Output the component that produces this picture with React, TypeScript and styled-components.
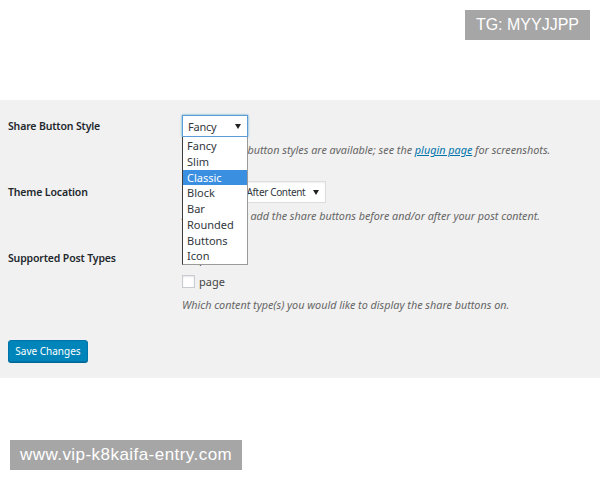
import React from "react";
import styled, { createGlobalStyle } from "styled-components";

const GlobalStyle = createGlobalStyle`
  html, body {
    margin: 0;
    padding: 0;
    background: #fff;
  }
  body {
    font-family: "Noto Sans", "Open Sans", sans-serif;
    color: #23282d;
  }
`;

const Page = styled.div`
  position: relative;
  width: 600px;
  height: 480px;
  display: flex;
  flex-direction: column;
  background: #fff;
  overflow: hidden;
`;

const TopGap = styled.div`
  height: 100px;
  flex: none;
`;

// grey overlay labels stamped on the screenshot
const Watermark = styled.div<{ $corner: "top-right" | "bottom-left" }>`
  position: absolute;
  ${(p) =>
    p.$corner === "top-right"
      ? "top: 10px; right: 10px; font-size: 16px; padding: 0 11px;"
      : "bottom: 10px; left: 10px; font-size: 17px; letter-spacing: 0.45px; padding: 0 10px;"}
  height: 30px;
  line-height: 30px;
  background: #a6a6a6;
  color: #fff;
  font-family: "Liberation Sans", Arial, sans-serif;
  z-index: 5;
`;

const Panel = styled.div`
  height: 278px;
  flex: none;
  box-sizing: border-box;
  background: #f1f1f1;
  padding: 15px 0 0 8px;
  display: flex;
  flex-direction: column;
`;

const Row = styled.div<{ $gap?: number }>`
  display: flex;
  margin-top: ${(p) => p.$gap ?? 0}px;
`;

const Label = styled.div<{ $lh: number }>`
  width: 174px;
  flex: none;
  font-size: 10.5px;
  letter-spacing: -0.15px;
  font-weight: 600;
  color: #23282d;
  line-height: ${(p) => p.$lh}px;
`;

const Field = styled.div`
  display: flex;
  flex-direction: column;
  align-items: flex-start;
`;

const SelectWrap = styled.div`
  position: relative;
`;

const Select = styled.div<{ $width: number; $focused?: boolean; $compact?: boolean }>`
  box-sizing: border-box;
  width: ${(p) => p.$width}px;
  height: 22px;
  display: flex;
  align-items: center;
  gap: 4px;
  padding: 0 6px 0 ${(p) => (p.$compact ? 13 : 5)}px;
  background: #fff;
  border: 1px solid ${(p) => (p.$focused ? "#5b9dd9" : "#ddd")};
  box-shadow: ${(p) =>
    p.$focused
      ? "0 0 2px rgba(30, 140, 190, 0.8)"
      : "inset 0 1px 2px rgba(0, 0, 0, 0.07)"};
  font-size: ${(p) => (p.$compact ? 10 : 11)}px;
  letter-spacing: ${(p) => (p.$compact ? -0.35 : -0.25)}px;
  color: #32373c;
  white-space: nowrap;
`;

const SelectText = styled.span`
  flex: 1;
  overflow: hidden;
`;

const Dropdown = styled.ul`
  position: absolute;
  top: 100%;
  left: 0;
  width: 66px;
  box-sizing: border-box;
  margin: 0;
  padding: 1px 0 0;
  list-style: none;
  background: #fff;
  border: 1px solid #9a9a9a;
  border-left-color: #3c3c3c;
  border-top: none;
  z-index: 3;
`;

const Option = styled.li<{ $active?: boolean }>`
  height: 15.75px;
  line-height: 15.75px;
  padding-left: 4px;
  font-size: 11px;
  color: ${(p) => (p.$active ? "#fff" : "#32373c")};
  background: ${(p) => (p.$active ? "#3b8fe0" : "transparent")};
`;

const Description = styled.p<{ $gap: number }>`
  margin: ${(p) => p.$gap}px 0 0;
  font-size: 10.8px;
  line-height: 15px;
  font-style: italic;
  color: #666;
  white-space: nowrap;
`;

const Link = styled.a`
  color: #0073aa;
  text-decoration: underline;
`;

const CheckLine = styled.label<{ $gap?: number }>`
  display: flex;
  align-items: center;
  gap: 4px;
  height: 16px;
  margin-top: ${(p) => p.$gap ?? 0}px;
  font-size: 11px;
  color: #444;
`;

const CheckBox = styled.span`
  box-sizing: border-box;
  width: 13px;
  height: 13px;
  background: #fff;
  border: 1px solid #c8ccd0;
  box-shadow: inset 0 1px 2px rgba(0, 0, 0, 0.1);
`;

const SaveButton = styled.button`
  margin-top: 28px;
  width: 80px;
  height: 22px;
  padding: 0;
  box-sizing: border-box;
  background: #0085ba;
  border: 1px solid #0073aa;
  border-radius: 3px;
  box-shadow: 0 1px 0 #006799;
  color: #fff;
  font-family: "Noto Sans", "Open Sans", sans-serif;
  font-size: 10px;
`;

const Arrow = () => (
  <svg width="6" height="5" viewBox="0 0 6 5">
    <path d="M0 0 L6 0 L3 5 Z" fill="#222" />
  </svg>
);

const styles = ["Fancy", "Slim", "Classic", "Block", "Bar", "Rounded", "Buttons", "Icon"];

export default function App() {
  return (
    <Page>
      <GlobalStyle />
      <Watermark $corner="top-right">TG: MYYJJPP</Watermark>
      <TopGap />
      <Panel>
        <Row>
          <Label $lh={22}>Share Button Style</Label>
          <Field>
            <SelectWrap>
              <Select $width={66} $focused>
                <SelectText>Fancy</SelectText>
                <Arrow />
              </Select>
              <Dropdown>
                {styles.map((s) => (
                  <Option key={s} $active={s === "Classic"}>
                    {s}
                  </Option>
                ))}
              </Dropdown>
            </SelectWrap>
            <Description $gap={5}>
              Several fancy button styles are available; see the{" "}
              <Link>plugin page</Link> for screenshots.
            </Description>
          </Field>
        </Row>

        <Row $gap={24}>
          <Label $lh={22}>Theme Location</Label>
          <Field>
            <Select $width={144} $compact>
              <SelectText>Before and After Content</SelectText>
              <Arrow />
            </Select>
            <Description $gap={5}>
              Automatically add the share buttons before and/or after your post content.
            </Description>
          </Field>
        </Row>

        <Row $gap={27}>
          <Label $lh={16}>Supported Post Types</Label>
          <Field>
            <CheckLine>
              <CheckBox />
              post
            </CheckLine>
            <CheckLine $gap={7}>
              <CheckBox />
              page
            </CheckLine>
            <Description $gap={8}>
              Which content type(s) you would like to display the share buttons on.
            </Description>
          </Field>
        </Row>

        <div>
          <SaveButton>Save Changes</SaveButton>
        </div>
      </Panel>
      <Watermark $corner="bottom-left">www.vip-k8kaifa-entry.com</Watermark>
    </Page>
  );
}
